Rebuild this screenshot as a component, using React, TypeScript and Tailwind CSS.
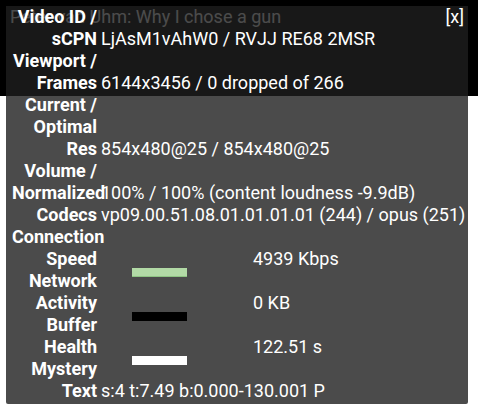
import React from "react";

type Row = {
   label: string[];
   value?: string;
   bar?: string;
};

const rows: Row[] = [
   { label: ["Video ID /", "sCPN"], value: "LjAsM1vAhW0 / RVJJ RE68 2MSR" },
   { label: ["Viewport /", "Frames"], value: "6144x3456 / 0 dropped of 266" },
   { label: ["Current /", "Optimal", "Res"], value: "854x480@25 / 854x480@25" },
   {
      label: ["Volume /", "Normalized"],
      value: "100% / 100% (content loudness -9.9dB)",
   },
   { label: ["Codecs"], value: "vp09.00.51.08.01.01.01.01 (244) / opus (251)" },
   {
      label: ["Connection", "Speed"],
      value: "4939 Kbps",
      bar: "bg-[#b2daa6] border-b border-[#8ec483]",
   },
   { label: ["Network", "Activity"], value: "0 KB", bar: "bg-black" },
   { label: ["Buffer", "Health"], value: "122.51 s", bar: "bg-white" },
   { label: ["Mystery", "Text"], value: "s:4 t:7.49 b:0.000-130.001 P" },
];

const StatRow: React.FC<{ row: Row }> = ({ row }) => {
   return (
      <div className="grid grid-cols-[85px_1fr] gap-x-[4px]">
         <div className="font-bold text-right">
            {row.label.map((line, i) => (
               <div key={i} className="whitespace-nowrap">
                  {line}
               </div>
            ))}
         </div>
         {row.bar ? (
            <div className="flex items-end self-end">
               <div className={`ml-[31px] mb-[-7px] h-[9px] w-[55px] ${row.bar}`} />
               <span className="ml-[66px] whitespace-nowrap">{row.value}</span>
            </div>
         ) : (
            <div className="self-end whitespace-nowrap">{row.value}</div>
         )}
      </div>
   );
};

export default function App() {
   return (
      <div
         className="relative h-[410px] w-[478px] overflow-hidden bg-white"
         style={{ fontFamily: "Roboto, 'Noto Sans', sans-serif" }}
      >
         <div className="h-[96px] bg-black px-[10px] pt-[6px] text-[18px] leading-[22px] text-white">
            Peter van Uhm: Why I chose a gun
         </div>
         <div className="absolute left-[6px] top-[6px] h-[398px] w-[462px] rounded-b-[2px] bg-[rgba(30,30,30,0.8)] pl-[6px] text-[18px] leading-[22px] text-white">
            <button className="absolute right-[4px] top-0 leading-[22px]">[x]</button>
            {rows.map((row, i) => (
               <StatRow key={i} row={row} />
            ))}
         </div>
      </div>
   );
}
